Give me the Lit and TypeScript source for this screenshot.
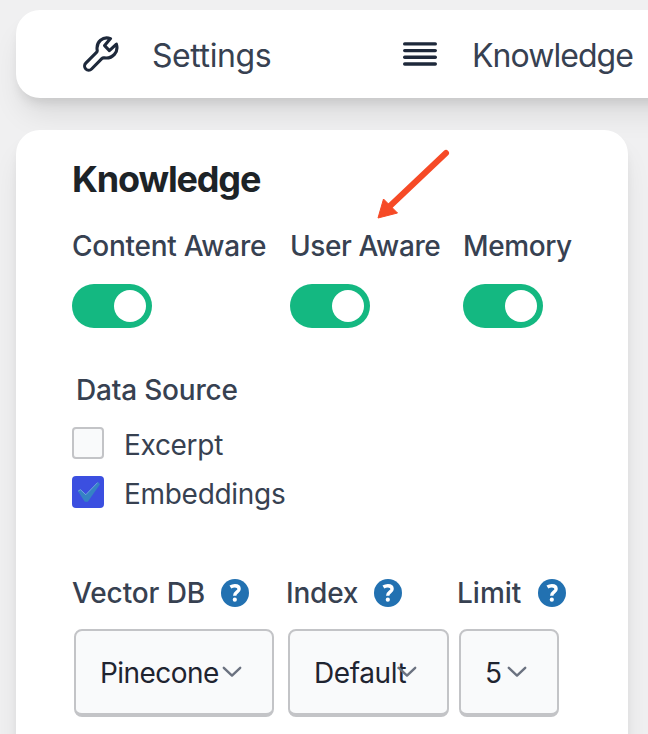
import { LitElement, html, css, svg } from "lit";
import { customElement } from "lit/decorators.js";

const help = () => html`<svg class="help" viewBox="0 0 28 28" aria-label="Help">
  <circle cx="14" cy="14" r="14" fill="#2271b1" />
  <path d="M9.4 8C10.8 7.1 12.2 6.7 13.9 6.7C16.7 6.7 18.1 7.8 18.1 9.9C18.1 12.9 13.7 12.8 13.7 16.7" fill="none" stroke="#fff" stroke-width="3.4" />
  <circle cx="13.8" cy="20.7" r="2.1" fill="#fff" />
</svg>`;

const chevron = () => html`<svg class="chevron" viewBox="0 0 20 12">
  <path d="M1.8 1.8L10 9.6L18.2 1.8" fill="none" stroke="#6b7280" stroke-width="2.4" stroke-linecap="round" stroke-linejoin="round" />
</svg>`;

@customElement("app-root")
export class AppRoot extends LitElement {
  static styles = css`
    :host {
      display: block;
      position: relative;
      box-sizing: border-box;
      height: 734px;
      padding: 10px 0 0 16px;
      overflow: hidden;
      background: #f0f0f1;
      font-family: Inter, "Liberation Sans", sans-serif;
      color: #374151;
      font-size: 28px;
      white-space: nowrap;
    }
    * { box-sizing: border-box; }
    svg { display: block; flex: none; }
    .tabs {
      display: flex;
      align-items: center;
      width: 720px;
      height: 88px;
      padding-left: 67px;
      border-radius: 24px;
      background: #fff;
      box-shadow: 0 20px 30px -6px rgba(0, 0, 0, 0.1), 0 8px 12px -4px rgba(0, 0, 0, 0.1);
      font-size: 32px;
      line-height: 40px;
    }
    .tabs span { padding-top: 3px; }
    .wrench { width: 36px; height: 36px; }
    .settings { width: 251px; margin-left: 33px; letter-spacing: -0.42px; }
    .bars { width: 34px; height: 24px; }
    .know { margin-left: 35px; letter-spacing: -0.95px; }
    .card {
      width: 612px;
      height: 640px;
      margin-top: 32px;
      padding: 27px 56px 0;
      border-radius: 24px;
      background: #fff;
      box-shadow: 0 20px 30px -6px rgba(0, 0, 0, 0.1), 0 8px 12px -4px rgba(0, 0, 0, 0.1);
    }
    h1 {
      margin: 0;
      color: #1d2327;
      font-size: 36px;
      line-height: 44px;
      font-weight: 700;
      letter-spacing: -1.15px;
    }
    .toggles { display: grid; grid-template-columns: 218px 173px 110px; margin-top: 25px; }
    .label { font-weight: 500; line-height: 40px; letter-spacing: -0.2px; }
    .label.content { letter-spacing: -0.27px; }
    .label.user { letter-spacing: -0.4px; }
    .label.memory { letter-spacing: -0.4px; }
    .label.vector-label { letter-spacing: -0.1px; }
    .label.limit-label { letter-spacing: 0; }
    .toggle {
      display: flex;
      justify-content: flex-end;
      width: 80px;
      height: 44px;
      margin-top: 18px;
      padding: 6px;
      border-radius: 22px;
      background: #14b881;
    }
    .knob { width: 32px; height: 32px; border-radius: 50%; background: #fff; }
    .source { margin: 42px 0 0 4px; }
    .check { display: flex; align-items: center; height: 32px; margin-top: 17px; }
    .check span { padding-top: 3px; letter-spacing: -0.3px; }
    .excerpt { letter-spacing: -0.35px; }
    .check:first-of-type { margin-top: 17px; }
    .box {
      width: 32px;
      height: 32px;
      margin-right: 20px;
      border: 2px solid #c3c4c7;
      border-radius: 4px;
      background: #f9fafb;
    }
    .box.on { border: 0; background: #3b4fe0; }
    .box svg { width: 32px; height: 32px; }
    .fields { display: flex; margin-top: 65px; }
    .head { display: flex; align-items: center; height: 40px; }
    .help { width: 28px; height: 28px; margin-left: auto; }
    .vector { width: 214px; }
    .index { width: 171px; }
    .limit { width: 110px; }
    .vector .head { width: 177px; }
    .index .head { width: 116px; }
    .limit .head { width: 109px; }
    .select {
      display: flex;
      align-items: center;
      height: 88px;
      margin: 16px 0 0 2px;
      padding: 0 0 1px 24px;
      border: 2px solid #c3c4c7;
      border-bottom-width: 4px;
      border-radius: 8px;
      background: #f9fafb;
      color: #1f2430;
    }
    .value { padding-top: 2px; letter-spacing: -0.55px; }
    .vector .value { width: 119px; }
    .index .value { width: 93px; letter-spacing: -0.4px; }
    .limit .value { width: 16px; }
    .vector .select { width: 200px; }
    .index .select { width: 161px; }
    .limit .select { width: 100px; }
    .chevron { width: 20px; height: 12px; margin-left: 3px; }
    .index .chevron { margin-left: -10px; }
    .limit .chevron { margin-left: 6px; }
    .arrow { position: absolute; left: 370px; top: 144px; width: 84px; height: 80px; }
  `;

  toggle(name: string, cls: string) {
    return html`<div><div class="label ${cls}">${name}</div><div class="toggle"><div class="knob"></div></div></div>`;
  }

  field(cls: string, name: string, value: string) {
    return html`<div class=${cls}>
      <div class="head"><span class="label ${cls}-label">${name}</span>${help()}</div>
      <div class="select"><span class="value">${value}</span>${chevron()}</div>
    </div>`;
  }

  render() {
    return html`
      <nav class="tabs">
        <svg class="wrench" viewBox="0 0 36 36" fill="none" stroke="#1e293b" stroke-width="3.1" stroke-linejoin="round" stroke-linecap="round">
          <path d="M27.5 2.6C20 -0.2 12.8 5.8 14.2 14.3C14.3 15 14.1 15.8 13.5 16.4L2.8 27.2A4.1 4.1 0 0 0 8.6 33L18.8 22.7C19.5 22 20.2 21.8 21.2 21.9C29.8 23 35.8 16 33.4 8.2L26.4 14.6L21.6 9.6Z" />
        </svg>
        <span class="settings">Settings</span>
        <svg class="bars" viewBox="0 0 34 24" stroke="#1e293b" stroke-width="3.4" stroke-linecap="round">
          ${[1.9, 8.6, 15.3, 22].map((y) => svg`<path d="M1.7 ${y}H32.3" />`)}
        </svg>
        <span class="know">Knowledge</span>
      </nav>
      <main class="card">
        <h1>Knowledge</h1>
        <div class="toggles">
          ${this.toggle("Content Aware", "content")}${this.toggle("User Aware", "user")}${this.toggle("Memory", "memory")}
        </div>
        <div class="source label">Data Source</div>
        <section>
          <div class="check"><div class="box"></div><span class="excerpt">Excerpt</span></div>
          <div class="check"><div class="box on"><svg viewBox="0 0 32 32">
            <path d="M5.8 15L8.5 13.5L13.8 18.5L26 6L28 8.2L15.8 25.7H12.8Z" fill="#3582c4" />
            <path d="M6.2 15L8.5 13.7L13.8 18.7L25.5 6.6" fill="none" stroke="#8ab8e8" stroke-width=".7" />
          </svg></div><span class="embed">Embeddings</span></div>
        </section>
        <div class="fields">
          ${this.field("vector", "Vector DB", "Pinecone")}${this.field("index", "Index", "Default")}${this.field("limit", "Limit", "5")}
        </div>
      </main>
      <svg class="arrow" viewBox="0 0 84 80">
        <path d="M76 9L20 62" stroke="#f64a26" stroke-width="6" stroke-linecap="round" />
        <path d="M8 74L13.5 55L27.5 69Z" fill="#f64a26" stroke="#f64a26" stroke-linejoin="round" />
      </svg>
    `;
  }
}
